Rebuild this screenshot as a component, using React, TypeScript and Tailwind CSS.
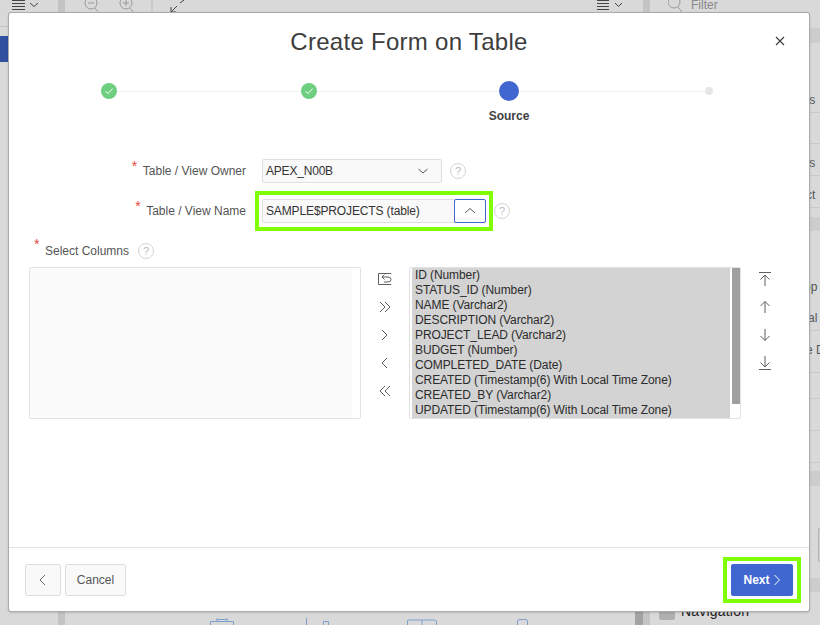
import React from "react";

const F = "font-['Liberation_Sans',Arial,sans-serif]";

function Help({ className = "" }: { className?: string }) {
  return (
    <span className={"flex h-4 w-4 shrink-0 items-center justify-center rounded-full border border-[#d4d4d4] text-[11px] leading-none text-[#bbbbbb] " + className}>?</span>
  );
}

function Check() {
  return (
    <span className="z-10 flex h-4 w-4 items-center justify-center rounded-full bg-[#6fcf80]">
      <svg width="10" height="10" viewBox="0 0 10 10" fill="none" stroke="#fff" strokeWidth="1">
        <path d="M1.5 5.5 L4 7.6 L8.6 2.6" />
      </svg>
    </span>
  );
}

function Ic({ d }: { d: string }) {
  return (
    <svg width="16" height="16" viewBox="0 0 16 16" fill="none" stroke="#5f5f5f" strokeWidth="1" className="shrink-0">
      <path d={d} />
    </svg>
  );
}

const columns = [
  "ID (Number)",
  "STATUS_ID (Number)",
  "NAME (Varchar2)",
  "DESCRIPTION (Varchar2)",
  "PROJECT_LEAD (Varchar2)",
  "BUDGET (Number)",
  "COMPLETED_DATE (Date)",
  "CREATED (Timestamp(6) With Local Time Zone)",
  "CREATED_BY (Varchar2)",
  "UPDATED (Timestamp(6) With Local Time Zone)",
];

function Label({ text, star }: { text: string; star: string }) {
  return (
    <div className="w-[120px] shrink-0 text-right text-[12px] text-[#555555]">
      <span className="relative">
        <span className={"absolute top-[-5px] text-[14px] leading-none text-[#e5483c] " + star}>*</span>
        {text}
      </span>
    </div>
  );
}

function Background() {
  return (
    <div className="absolute inset-0 flex overflow-hidden bg-[#d9d9d9] text-[12px] text-[#555]">
      <div className="flex w-[58px] shrink-0 flex-col">
        <div className="flex h-[27px] items-start border-b border-[#c4c4c4] pl-[12px]">
          <svg width="30" height="12" viewBox="0 0 30 12" fill="none" stroke="#444" strokeWidth="1">
            <path d="M0 .5H13M0 3.5H13M0 6.5H13M0 9.5H13M18 3l4 3.5 4-3.5" />
          </svg>
        </div>
        <div className="mt-[9px] h-[26px] w-[9px] bg-[#2f4f9f]" />
      </div>
      <div className="w-[7px] shrink-0 bg-[#c4c4c4]" />
      <div className="flex flex-1 flex-col">
        <div className="flex h-[13px] items-start justify-between overflow-hidden pr-[20px]">
          <svg width="130" height="14" viewBox="0 0 130 14" fill="none" stroke="#999" strokeWidth="1">
            <circle cx="26" cy="3" r="6" />
            <path d="M23 3H29M30 8l4 5" />
            <circle cx="61" cy="3" r="6" />
            <path d="M58 3H64M61 0V6M65 8l4 5" />
            <path d="M87 0V14" stroke="#bbb" />
            <path stroke="#444" d="M106 12l6-6M106 7v5h5M115 3l4-3" />
          </svg>
          <svg width="26" height="11" viewBox="0 0 26 11" fill="none" stroke="#444" strokeWidth="1">
            <path d="M0 .5H12M0 3.5H12M0 6.5H12M0 9.5H12M18 3l3.5 3.5L25 3" />
          </svg>
        </div>
        <div className="mt-auto h-[7px]">
          <svg width="340" height="7" viewBox="0 0 340 7" fill="none" stroke="#7f9fd0" strokeWidth="1" className="ml-[145px]">
            <path d="M.5 7V3.5H23.5V7M7 3.5V0M17 3.5V0M7 1.5H17" />
            <path d="M96.5 7V0M113.500 7V3.500H118.500V7" />
            <path d="M197.500 7V2.500Q197.500 2 199 2H224Q226.500 2 226.500 4V7M212 2V7" />
            <path d="M307.500 7V3Q307.500 1.500 310 1.500H315Q317.500 1.500 317.500 3V7" />
          </svg>
        </div>
      </div>
      <div className="w-[7px] shrink-0 bg-[#c4c4c4]" />
      <div className="relative flex w-[170px] shrink-0 flex-col">
        <div className="flex h-[13px] items-start gap-[9px] overflow-hidden pl-[18px] text-[#888]">
          <svg width="14" height="14" viewBox="0 0 14 14" fill="none" stroke="#999" strokeWidth="1" className="shrink-0">
            <circle cx="6" cy="2" r="6" />
            <path d="M10 7l4 5" />
          </svg>
          <span className="leading-[11px]">Filter</span>
        </div>
        <div className="mt-[15px] h-[15px] shrink-0 bg-[#cdcdcd]" />
        <div className="mt-[69px] border-t border-[#c8c8c8] pt-[30px]" />
        <div className="border-t border-[#c8c8c8] pt-[31px]" />
        <div className="border-t border-[#c8c8c8] pt-[31px]" />
        <div className="border-t border-[#c8c8c8] pt-[9px]" />
        <div className="h-[14px] bg-[#cdcdcd]" />
        <div className="mt-[99px] border-t border-[#c8c8c8] pt-[41px]" />
        <div className="border-t border-[#c8c8c8] pt-[25px]" />
        <div className="border-t border-[#c8c8c8] pt-[31px]" />
        <div className="border-t border-[#c8c8c8] pt-[31px]" />
        <div className="border-t border-[#c8c8c8] pt-[8px]" />
        <div className="h-[15px] bg-[#cdcdcd]" />
        <div className="relative mt-[42px] flex h-[34px] justify-end">
          <div className="w-[2px] rounded-l-[2px] border border-r-0 border-[#b5b5b5] bg-[#d0d0d0]" />
        </div>
        <div className="mt-[16px] h-[14px] bg-[#cdcdcd]" />
        <div className="mt-[11px] flex items-end gap-[6px] pl-[9px] text-[14px] leading-[16px] text-[#222]">
          <span className="mb-[-1px] h-[14px] w-[16px] rounded-[2px] bg-[#b0b0b0]" />
          <span className="tracking-[0.2px]">Navigation</span>
        </div>
      </div>
      <div className="absolute left-[635px] top-[600px] h-[25px] w-[8px] bg-[#a3a3a3]" />
      <div className="absolute left-[809px] top-[93px] flex w-[11px] flex-col whitespace-nowrap leading-[14px] text-[#555]">
        <span className="-ml-[3px]">ts</span>
        <span className="mt-[49px] -ml-[3px]">ts</span>
        <span className="mt-[18px] -ml-[3px]">ct</span>
        <span className="mt-[78px] -ml-[5px]">op</span>
        <span className="mt-[17px] -ml-[1px]">al</span>
        <span className="mt-[18px] -ml-[3px]">e D</span>
      </div>
    </div>
  );
}

export default function App() {
  return (
    <div className={"relative h-[625px] w-[820px] overflow-hidden " + F}>
      <Background />
      <div className="absolute left-[9px] top-[13px] flex h-[598px] w-[800px] flex-col rounded-[2px] bg-white shadow-[0_0_0_1px_#aaaaaa,0_1px_3px_rgba(0,0,0,0.3)]">
        <div className="flex-1">
          <div className="relative flex h-[56px] items-center justify-center pt-[1px]">
            <h1 className="text-[24px] font-normal leading-[32px] tracking-[0.28px] text-[#3d3d3d]">Create Form on Table</h1>
            <svg className="absolute left-[766px] top-[23px]" width="10" height="10" viewBox="0 0 10 10" fill="none" stroke="#404040" strokeWidth="1.2">
              <path d="M1 1L9 9M9 1L1 9" />
            </svg>
          </div>

          <div className="relative mt-[12px] grid h-[40px] grid-cols-4 items-start">
            <div className="absolute left-[100px] right-[100px] top-[10px] h-[1px] bg-[#f2f2f2]" />
            <div className="flex justify-center pt-[2px]"><Check /></div>
            <div className="flex justify-center pt-[2px]"><Check /></div>
            <div className="z-10 flex flex-col items-center">
              <span className="h-5 w-5 rounded-full bg-[#3f67cf]" />
              <span className="mt-[8px] text-[12px] font-bold leading-[14px] text-[#404040]">Source</span>
            </div>
            <div className="flex justify-center pt-[6px]">
              <span className="z-10 h-2 w-2 rounded-full bg-[#e6e6e6]" />
            </div>
          </div>

          <div className="mt-[38px] flex h-[24px] items-center pl-[117px]">
            <Label text="Table / View Owner" star="-left-[11px]" />
            <div className="ml-[16px] flex h-[24px] w-[180px] items-center justify-between rounded-[2px] border border-[#dfdfdf] bg-[#f9f9f9] pl-[3px] pr-[12px] text-[12px] tracking-[-0.2px] text-[#333]">
              <span>APEX_N00B</span>
              <svg width="12" height="12" viewBox="0 0 12 12" fill="none" stroke="#555" strokeWidth="1"><path d="M1.500 4l4.500 4 4.500-4" /></svg>
            </div>
            <Help className="ml-[8px]" />
          </div>

          <div className="mt-[8px] flex h-[40px] items-center pl-[117px]">
            <Label text="Table / View Name" star="-left-[11px]" />
            <div className="ml-[9px] flex h-[40px] w-[238px] items-center border-[4px] border-[#80ff00] px-[3px]">
              <div className="flex h-[24px] w-full items-center justify-between rounded-[2px] border border-[#dfdfdf] bg-[#f9f9f9] pl-[3px] text-[12px] tracking-[-0.13px] text-[#333]">
                <span>SAMPLE$PROJECTS (table)</span>
                <span className="-mr-[1px] flex h-[24px] w-[32px] items-center justify-center rounded-[2px] border border-[#3f67cf] bg-white">
                  <svg width="12" height="12" viewBox="0 0 12 12" fill="none" stroke="#555" strokeWidth="1"><path d="M1 8l5-4.500L11 8" /></svg>
                </span>
              </div>
            </div>
            <Help className="ml-[1px]" />
          </div>

          <div className="mt-[10px] flex h-[20px] items-center pl-[36px]">
            <span className="relative text-[12px] text-[#555555]">
              <span className="absolute -left-[11px] top-[-5px] text-[14px] leading-none text-[#e5483c]">*</span>
              Select Columns
            </span>
            <Help className="ml-[9px]" />
          </div>

          <div className="mt-[6px] flex h-[152px] items-stretch pl-[20px]">
            <div className="w-[332px] shrink-0 rounded-[2px] border border-[#e2e2e2] bg-white pr-[8px]">
              <div className="h-full w-full bg-[#fafafa]" />
            </div>
            <div className="flex w-[48px] shrink-0 flex-col items-center gap-[12px] pt-[4px]">
              <Ic d="M14 3V2.500H1.500V13.500H14V13M5 6H11Q14 6 14 8.500T11 11H7M7.500 3.500L5 6L7.500 8.500" />
              <Ic d="M3 3L8 8L3 13M8 3L13 8L8 13" />
              <Ic d="M5 3L10 8L5 13" />
              <Ic d="M10 3L5 8L10 13" />
              <Ic d="M8 3L3 8L8 13M13 3L8 8L13 13" />
            </div>
            <div className="flex w-[332px] shrink-0 justify-between rounded-[2px] border border-[#e2e2e2] bg-white pl-[2px]">
              <div className="h-full w-[318px] bg-[#d3d3d3] pl-[3px] text-[12px] leading-[15px] tracking-[-0.095px] text-[#2b2b2b]">
                {columns.map((c) => (<div key={c} className="whitespace-nowrap">{c}</div>))}
              </div>
              <div className="h-[136px] w-[8px] bg-[#a0a0a0]" />
            </div>
            <div className="flex w-[48px] shrink-0 flex-col items-center gap-[12px] pt-[4px]">
              <Ic d="M2 1.500H14M8 15V4M3.500 8.500L8 4L12.500 8.500" />
              <Ic d="M8 14V2.500M3.500 7L8 2.500L12.500 7" />
              <Ic d="M8 2V13.500M3.500 9L8 13.500L12.500 9" />
              <Ic d="M8 1V12M3.500 7.500L8 12L12.500 7.500M2 14.500H14" />
            </div>
          </div>
        </div>

        <div className="flex h-[64px] items-center justify-between border-t border-[#e3e3e3] px-[16px]">
          <div className="flex gap-[4px]">
            <button className="flex h-[32px] w-[36px] items-center justify-center rounded-[2px] border border-[#dedede] bg-[#f9f9f9]">
              <svg width="10" height="12" viewBox="0 0 10 12" fill="none" stroke="#666" strokeWidth="1"><path d="M7 1L2 6L7 11" /></svg>
            </button>
            <button className="h-[32px] w-[61px] rounded-[2px] border border-[#dedede] bg-[#f9f9f9] text-[12px] text-[#555]">Cancel</button>
          </div>
          <div className="mr-[-8px] flex h-[46px] w-[78px] items-center justify-center border-[4px] border-[#80ff00]">
            <button className="flex h-[32px] w-[62px] items-center justify-center gap-[3px] rounded-[2px] bg-[#3f67cf] text-[12px] font-bold text-white">
              Next
              <svg width="8" height="12" viewBox="0 0 8 12" fill="none" stroke="#fff" strokeWidth="1"><path d="M1.500 1L6.500 6L1.500 11" /></svg>
            </button>
          </div>
        </div>
      </div>
    </div>
  );
}
